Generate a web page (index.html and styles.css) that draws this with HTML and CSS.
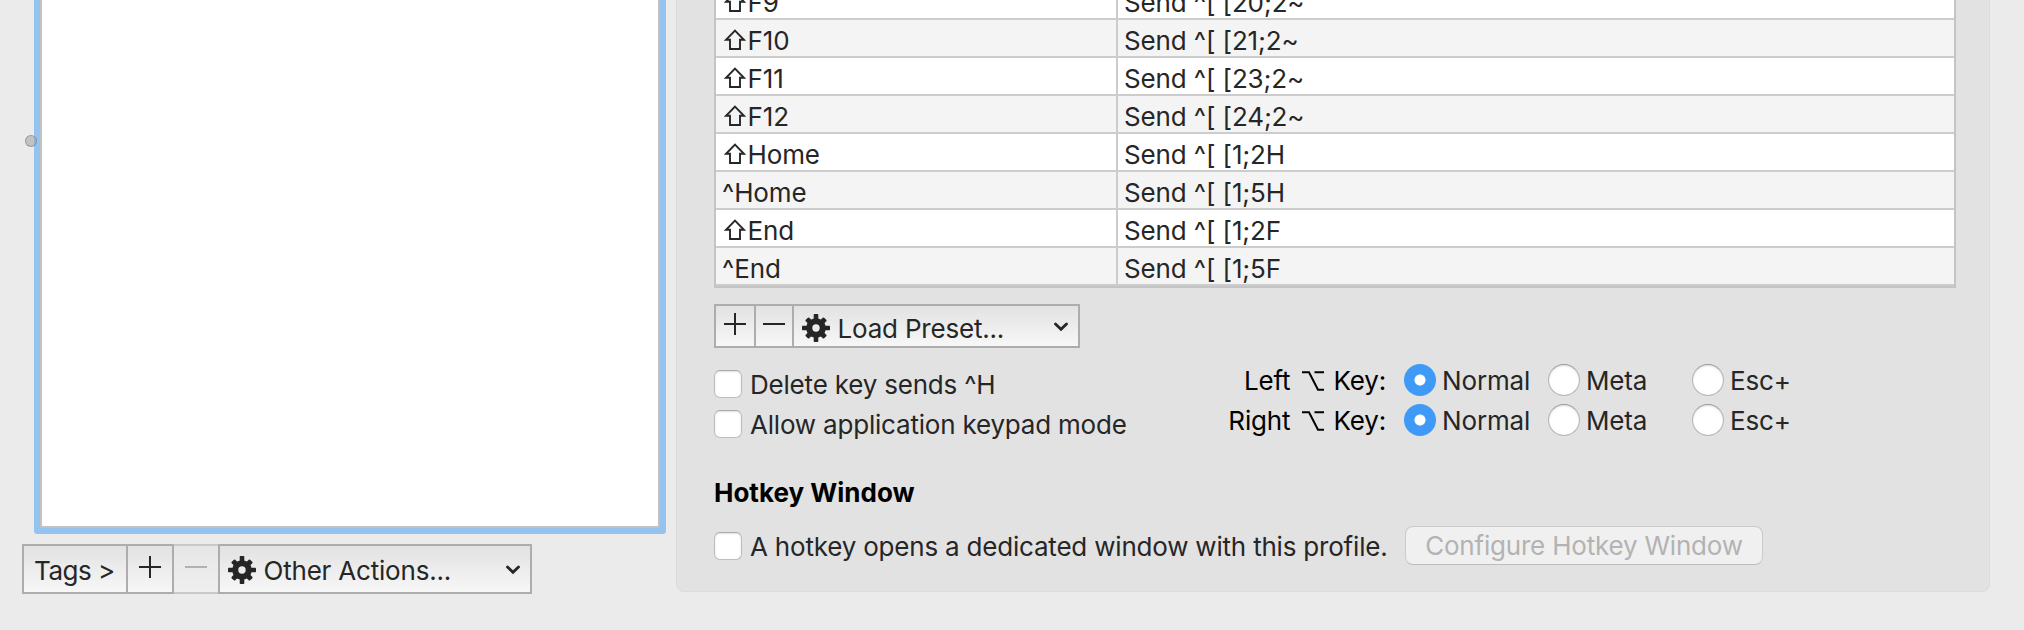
FILE: index.html
```
<!DOCTYPE html>
<html lang="en">
<head>
<meta charset="utf-8">
<title>Profiles – Keys</title>
<link rel="stylesheet" href="styles.css">
</head>
<body>
<svg class="defs" width="0" height="0">
  <defs>
    <symbol id="gear" viewBox="0 0 28 28">
      <g fill="#262626">
        <rect x="11.7" y="0" width="4.6" height="28" rx=".7"/><rect x="0" y="11.7" width="28" height="4.6" rx=".7"/>
        <g transform="rotate(45 14 14)"><rect x="11.5" y="1" width="5" height="26" rx="1"/><rect x="1" y="11.5" width="26" height="5" rx="1"/></g>
        <circle cx="14" cy="14" r="9.8"/>
      </g>
      <circle cx="14" cy="14" r="3.7" fill="#ececec"/>
    </symbol>
    <symbol id="chevron" viewBox="0 0 14 10"><path d="M1.5 2 L7 7.3 L12.5 2" fill="none" stroke="#262626" stroke-width="2.8" stroke-linecap="round"/></symbol>
    <symbol id="plus" viewBox="0 0 22 22"><path d="M11 0V22M0 11H22" stroke="currentColor" stroke-width="2"/></symbol>
    <symbol id="minus" viewBox="0 0 22 22"><path d="M0 11H22" stroke="currentColor" stroke-width="2"/></symbol>
    <symbol id="shift" viewBox="0 0 22 22"><path d="M11 1.6 L20 10.8 H16 V20 H6 V10.8 H2 Z" fill="none" stroke="#262626" stroke-width="1.9"/></symbol>
    <symbol id="option" viewBox="0 0 24 20"><path d="M1 1.2H8L17 18.8H23M13.5 1.2H23" fill="none" stroke="#000" stroke-width="2"/></symbol>
  </defs>
</svg>
<div class="window">
  <aside class="sidebar">
    <div class="list"></div>
    <div class="bar actions">
      <div class="seg tags"><span>Tags &gt;</span></div>
      <div class="seg add"><svg width="22" height="22"><use href="#plus"/></svg></div>
      <div class="seg remove"><svg width="22" height="22"><use href="#minus"/></svg></div>
      <div class="seg menu"><svg class="gear" width="28" height="28"><use href="#gear"/></svg><span>Other Actions...</span><svg class="chev" width="14" height="10"><use href="#chevron"/></svg></div>
    </div>
    <div class="divider-dot"></div>
  </aside>
  <main class="panel">
    <div class="table">
      <div class="row"><div class="key"><svg width="22" height="22"><use href="#shift"/></svg><span>F9</span></div><div class="act"><span>Send ^[ [20;2~</span></div></div>
      <div class="row"><div class="key"><svg width="22" height="22"><use href="#shift"/></svg><span>F10</span></div><div class="act"><span>Send ^[ [21;2~</span></div></div>
      <div class="row"><div class="key"><svg width="22" height="22"><use href="#shift"/></svg><span>F11</span></div><div class="act"><span>Send ^[ [23;2~</span></div></div>
      <div class="row"><div class="key"><svg width="22" height="22"><use href="#shift"/></svg><span>F12</span></div><div class="act"><span>Send ^[ [24;2~</span></div></div>
      <div class="row"><div class="key"><svg width="22" height="22"><use href="#shift"/></svg><span>Home</span></div><div class="act"><span>Send ^[ [1;2H</span></div></div>
      <div class="row"><div class="key"><span>^Home</span></div><div class="act"><span>Send ^[ [1;5H</span></div></div>
      <div class="row"><div class="key"><svg width="22" height="22"><use href="#shift"/></svg><span>End</span></div><div class="act"><span>Send ^[ [1;2F</span></div></div>
      <div class="row"><div class="key"><span>^End</span></div><div class="act"><span>Send ^[ [1;5F</span></div></div>
    </div>
    <div class="bar presets">
      <div class="seg p-add"><svg width="22" height="22"><use href="#plus"/></svg></div>
      <div class="seg p-remove"><svg width="22" height="22"><use href="#minus"/></svg></div>
      <div class="seg menu"><svg class="gear" width="28" height="28"><use href="#gear"/></svg><span>Load Preset...</span><svg class="chev" width="14" height="10"><use href="#chevron"/></svg></div>
    </div>
    <div class="options">
      <div class="checks">
        <label class="check"><i></i><span>Delete key sends ^H</span></label>
        <label class="check"><i></i><span>Allow application keypad mode</span></label>
      </div>
      <div class="radios">
        <div class="name"><span>Left</span><svg width="24" height="20"><use href="#option"/></svg><span>Key:</span></div>
        <label class="radio on"><i></i><span>Normal</span></label><label class="radio"><i></i><span>Meta</span></label><label class="radio"><i></i><span>Esc+</span></label>
        <div class="name"><span>Right</span><svg width="24" height="20"><use href="#option"/></svg><span>Key:</span></div>
        <label class="radio on"><i></i><span>Normal</span></label><label class="radio"><i></i><span>Meta</span></label><label class="radio"><i></i><span>Esc+</span></label>
      </div>
    </div>
    <h2>Hotkey Window</h2>
    <div class="hotkey">
      <label class="check"><i></i><span>A hotkey opens a dedicated window with this profile.</span></label>
      <button disabled>Configure Hotkey Window</button>
    </div>
  </main>
</div>
</body>
</html>
```
FILE: styles.css
```
* { box-sizing: border-box; }
body {
  margin: 0;
  background: #ebebeb;
  color: #262626;
  font: 26px/36px Inter, "Liberation Sans", sans-serif;
  letter-spacing: -.2px;
  white-space: nowrap;
}
.defs { display: block; }
svg { flex: none; }
.window { display: flex; width: 2024px; height: 630px; overflow: hidden; }
.sidebar { position: relative; width: 676px; flex: none; }
.list {
  width: 620px;
  height: 528px;
  margin-left: 40px;
  background: #fff;
  border: 2px solid #c2c2c2;
  border-top: 0;
  box-shadow: 0 0 0 6px #95c3f0;
  border-radius: 1px;
}
.divider-dot {
  position: absolute;
  left: 25px;
  top: 135px;
  width: 12px;
  height: 12px;
  border-radius: 50%;
  border: 1px solid rgba(120, 120, 120, .55);
  background: rgba(160, 160, 160, .55);
}
.bar { display: flex; }
.seg {
  display: flex;
  align-items: center;
  justify-content: center;
  border: 2px solid #adadad;
  border-left-width: 0;
  background: linear-gradient(#e2e2e2, #f7f7f7);
}
.seg:first-child { border-left-width: 2px; }
.seg svg { margin-top: -4px; }
.actions { margin: 16px 0 0 22px; height: 50px; }
.tags { width: 106px; justify-content: flex-start; padding: 3px 0 0 10px; letter-spacing: -.5px; }
.add { width: 46px; }
.remove { width: 44px; color: #b0b0b0; border-color: #c9c9c9; border-right: 0; background: linear-gradient(#e6e6e6, #efefef); }
.menu { justify-content: flex-start; padding-left: 8px; }
.actions .menu { width: 314px; border-left-width: 2px; }
.menu span { padding-left: 7.5px; }
.actions .menu span { padding-top: 3px; }
.presets .menu span { padding-top: 5px; }
.actions .gear { margin-top: 2px; }
.presets .gear { margin-top: 4px; }
.menu .chev { margin: 1px 10px 0 auto; }
.panel {
  width: 1314px;
  height: 592px;
  padding-left: 37px;
  background: #e2e2e2;
  border: 1px solid #dcdcdc;
  border-top: 0;
  border-radius: 0 0 8px 8px;
}
.table {
  width: 1242px;
  height: 288px;
  border: 2px solid #c4c4c4;
  border-top: 0;
  overflow: hidden;
  display: flex;
  flex-direction: column;
  justify-content: flex-end;
  letter-spacing: -.12px;
}
.row { display: flex; flex: none; height: 38px; background: #fff; border-bottom: 2px solid #ccc; }
.row:nth-child(even) { background: #f4f4f4; }
.key, .act { display: flex; align-items: center; padding-top: 5px; }
.key { width: 402px; padding-left: 6px; border-right: 2px solid #ccc; }
.key svg { margin: -2px 1.5px 0 2px; }
.act { padding-left: 6px; }
.presets { margin-top: 16px; height: 44px; }
.p-add { width: 42px; }
.p-remove { width: 38px; }
.presets .menu { width: 286px; }
.options { display: flex; height: 127px; }
.checks { width: 500px; padding-top: 22px; }
.check { display: flex; height: 28px; margin-bottom: 12px; }
.check i {
  width: 28px;
  height: 28px;
  flex: none;
  border-radius: 6px;
  border: 1px solid #bdbdbd;
  border-top-color: #a8a8a8;
  background: #fff;
  box-shadow: inset 0 1px 2px #e0e0e0;
}
.check span { margin: -3px 0 0 8px; }
.radios {
  display: grid;
  grid-template-columns: 190px 144px 144px 120px;
  grid-auto-rows: 40px;
  padding-top: 16px;
  letter-spacing: -.15px;
}
.name { display: flex; justify-content: flex-end; padding-right: 18px; color: #000; }
.name svg { margin: 7px 8px 0 11px; }
.name span, .radio span { margin-top: -1px; }
.radio { display: flex; }
.radio i {
  width: 32px;
  height: 32px;
  flex: none;
  margin-right: 6px;
  border-radius: 50%;
  border: 1px solid #b4b4b4;
  border-top-color: #999;
  background: #fff;
  box-shadow: inset 0 1px 2px #ddd;
}
.radio.on i { border: 0; box-shadow: none; background: radial-gradient(circle, #fff 5px, #3f99f7 6px); }
h2 { margin: 0; font-size: 26px; line-height: 36px; font-weight: 700; letter-spacing: 0; color: #000; }
.hotkey { display: flex; padding-top: 21px; }
.hotkey .check { width: 691px; }
button {
  width: 358px;
  height: 39px;
  margin-top: -6px;
  padding: 0;
  border: 1px solid #cbcbcb;
  border-radius: 8px;
  border-bottom-color: #bcbcbc;
  background: #f0f0f0;
  color: #b3b3b3;
  font: inherit;
  letter-spacing: -.2px;
}
```
